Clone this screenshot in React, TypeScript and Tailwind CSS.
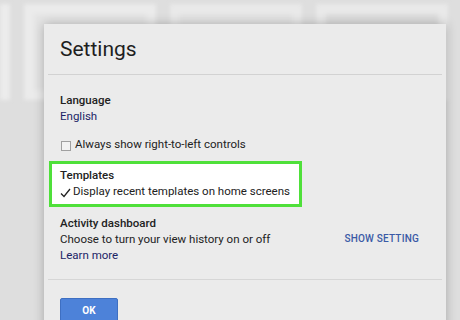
import React from "react";

const Checkmark = () => (
  <svg width="11" height="10" viewBox="0 0 11 10" className="shrink-0 mt-[3px]">
    <path d="M1 5.5 L4 8.5 L10 1" fill="none" stroke="#222" strokeWidth="1.3" />
  </svg>
);

export default function App() {
  return (
    <div
      className="relative w-[460px] h-[320px] overflow-hidden bg-[#dedede]"
      style={{ fontFamily: "Roboto, 'Liberation Sans', sans-serif" }}
    >
      {/* blurred page behind the dialog */}
      <div className="flex gap-[14px] pt-[4px] blur-[2px]">
        <div className="w-[10px] h-[96px] bg-[#ececec]" />
        <div className="w-[132px] h-[96px] bg-[#ebebeb] p-[10px]">
          <div className="h-[76px] bg-[#e4e4e4]" />
        </div>
        <div className="w-[132px] h-[96px] bg-[#e9e9e9] p-[10px]">
          <div className="h-[76px] bg-[#e3e3e3]" />
        </div>
        <div className="w-[132px] h-[96px] bg-[#e9e9e9] p-[10px]">
          <div className="h-[76px] bg-[#dcdcdc]" />
        </div>
      </div>

      {/* dialog */}
      <div className="absolute left-[44px] top-[24px] w-[402px] h-[320px] bg-[#ebebeb] shadow-[0_0_10px_rgba(0,0,0,0.25)]">
        <div className="mx-[4px] h-[51px] flex items-center px-[12px] border-b border-[#d2d2d2]">
          <span className="text-[21px] text-[#1e1e1e] leading-none">Settings</span>
        </div>

        <div className="pt-[17px] text-[11.5px] leading-[16px] text-[#222]">
          <div className="px-[16px]">
            <div className="font-medium">Language</div>
            <div className="text-[#1b1f66]">English</div>
            <div className="mt-[12px] flex items-center gap-[4px]">
              <span className="w-[10px] h-[10px] mt-[4px] ml-[1px] border border-[#a0a0a0] bg-[#f2f2f2]" />
              <span>Always show right-to-left controls</span>
            </div>
          </div>

          <div className="ml-[5px] mt-[9px] w-[253px] border-[3px] border-[#4fe03a] bg-white pl-[8px] pt-[3px] pb-[5px]">
            <div className="font-medium">Templates</div>
            <div className="flex items-center gap-[2px]">
              <Checkmark />
              <span>Display recent templates on home screens</span>
            </div>
          </div>

          <div className="px-[16px] mt-[8px] flex items-center justify-between pr-[27px]">
            <div>
              <div className="font-medium">Activity dashboard</div>
              <div>Choose to turn your view history on or off</div>
              <div className="text-[#1b2466]">Learn more</div>
            </div>
            <span className="text-[10px] font-medium text-[#3a5aa6] tracking-[0.2px]">SHOW SETTING</span>
          </div>

          <div className="mx-[4px] mt-[16px] border-b border-[#d6d6d6]" />

          <div className="px-[16px] pt-[18px]">
            <button className="w-[58px] h-[26px] bg-[#4d82d9] border border-[#3e6fc2] rounded-[2px] text-white text-[10px] font-bold">
              OK
            </button>
          </div>
        </div>
      </div>
    </div>
  );
}
